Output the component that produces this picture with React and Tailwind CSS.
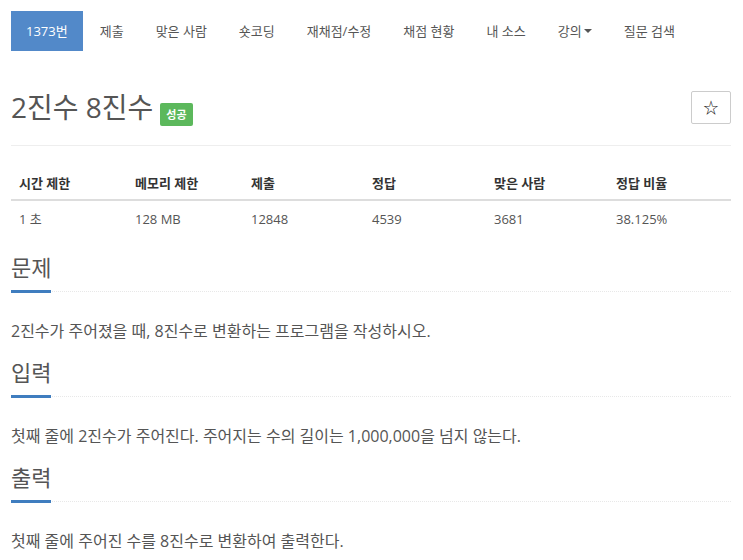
const navItems = ['제출', '맞은 사람', '숏코딩', '재채점/수정', '채점 현황', '내 소스', '강의', '질문 검색'];

const stats = [
  { label: '시간 제한', value: '1 초', w: 'w-[116px]' },
  { label: '메모리 제한', value: '128 MB', w: 'w-[116px]' },
  { label: '제출', value: '12848', w: 'w-[121px]' },
  { label: '정답', value: '4539', w: 'w-[122px]' },
  { label: '맞은 사람', value: '3681', w: 'w-[122px]' },
  { label: '정답 비율', value: '38.125%', w: 'w-[123px]' },
];

const sections = [
  { title: '문제', body: '2진수가 주어졌을 때, 8진수로 변환하는 프로그램을 작성하시오.' },
  { title: '입력', body: '첫째 줄에 2진수가 주어진다. 주어지는 수의 길이는 1,000,000을 넘지 않는다.' },
  { title: '출력', body: '첫째 줄에 주어진 수를 8진수로 변환하여 출력한다.' },
];

function Section({ title, body }) {
  return (
    <section className="mt-[15px]">
      <div className="flex border-b border-dotted border-[#e8e8e8]">
        <h2 className="-mb-[2px] border-b-[3px] border-[#3f7dbf] pb-[8px] text-[22px] leading-[30px] font-normal text-[#555]">
          {title}
        </h2>
      </div>
      <p className="mt-[28px] text-[16px] leading-[22px] text-[#555]">{body}</p>
    </section>
  );
}

export default function App() {
  return (
    <div
      className="min-h-[560px] bg-white pl-[11px] pr-[12px] pt-[11px]"
      style={{ fontFamily: '"Open Sans", "Noto Sans CJK KR", sans-serif' }}
    >
      {/* problem menu */}
      <ul className="flex text-[13px] leading-[20px] text-[#555]">
        <li className="bg-[#5289c9] px-[15px] py-[10px] text-white">1373번</li>
        {navItems.map((item) => (
          <li key={item} className="ml-[2px] flex items-center px-[15px] py-[10px]">
            {item}
            {item === '강의' && (
              <span className="ml-[2px] inline-block h-0 w-0 border-x-[4px] border-t-[4px] border-x-transparent border-t-[#555]" />
            )}
          </li>
        ))}
      </ul>

      {/* title */}
      <div className="mt-[40px] flex items-center justify-between border-b border-[#eee] pb-[21px]">
        <div className="flex items-center">
          <h1 className="text-[28px] leading-[33px] font-normal text-[#555]">2진수 8진수</h1>
          <span className="ml-[7px] translate-y-[7px] rounded-[2px] bg-[#5cb85c] px-[6px] py-[3px] text-[11px] leading-[17px] font-bold text-white">
            성공
          </span>
        </div>
        <button className="flex h-[33px] w-[40px] items-center justify-center rounded-[2px] border border-[#ccc] bg-white text-[15px] text-[#222]">
          ☆
        </button>
      </div>

      {/* limits table */}
      <table className="mt-[19px] mb-[11px] w-full border-collapse text-left text-[13px] leading-[20px]">
        <thead>
          <tr className="border-b-2 border-[#ddd]">
            {stats.map((s) => (
              <th key={s.label} className={`${s.w} px-[8px] pt-[8px] pb-[6px] font-bold text-[#333]`}>
                {s.label}
              </th>
            ))}
          </tr>
        </thead>
        <tbody>
          <tr>
            {stats.map((s) => (
              <td key={s.label} className="p-[8px] text-[#555]">
                {s.value}
              </td>
            ))}
          </tr>
        </tbody>
      </table>

      {sections.map((s) => (
        <Section key={s.title} {...s} />
      ))}
    </div>
  );
}
